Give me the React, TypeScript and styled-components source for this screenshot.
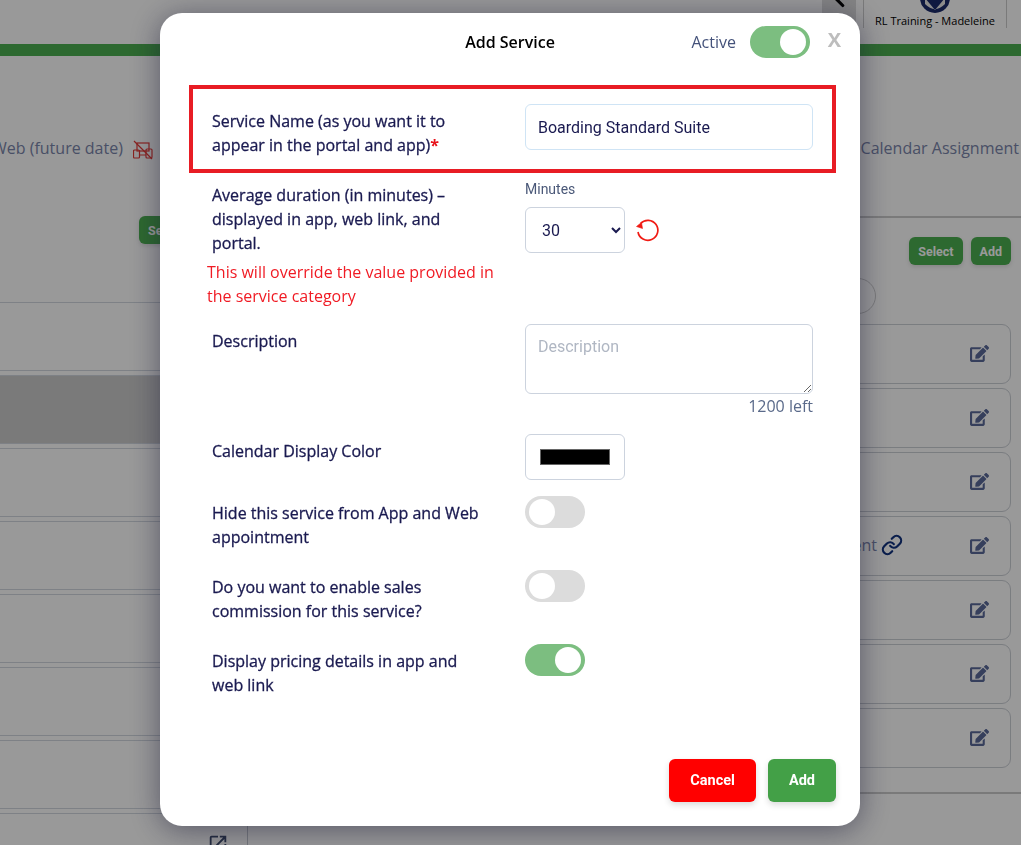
import React, { useState } from 'react';
import styled, { createGlobalStyle } from 'styled-components';
import { FaEdit } from 'react-icons/fa';
import { MdOpenInNew } from 'react-icons/md';
import { ChevronLeft, Link as LinkIcon } from 'lucide-react';

const GlobalStyle = createGlobalStyle`
  html, body {
    margin: 0;
    padding: 0;
    height: 845px;
    overflow: hidden;
    background: #fff;
    font-family: "Open Sans", sans-serif;
  }
`

const App = () => {
  const [active, setActive] = useState(true)
  const [hidden, setHidden] = useState(false)
  const [commission, setCommission] = useState(false)
  const [pricing, setPricing] = useState(true)

  return (
    <>
      <GlobalStyle />
      <Page>
        <TopBar>
          <BackBox><ChevronLeft size={30} strokeWidth={2.5} /></BackBox>
          <Account>
            <svg width="30" height="13" viewBox="0 0 30 13">
              <circle cx="15" cy="-2" r="15" fill="#1a2a6c" />
              <path d="M5 -2 L15 10 L25 -2 L25 4 Q20 9 15 9 Q10 9 5 4 Z" fill="#e8e8e8" />
            </svg>
            <span>RL Training - Madeleine</span>
          </Account>
        </TopBar>
        <GreenBar />
        <Tabs>
          <TabGroup>
            <span>Web (future date)</span>
            <svg width="20" height="20" viewBox="0 0 20 20" fill="none" stroke="#e53935" strokeWidth="1.2">
              <rect x="4" y="3" width="12" height="8" />
              <rect x="0.5" y="10" width="6" height="8" rx="1" />
              <rect x="13" y="9" width="6" height="9" rx="1" />
              <path d="M6.5 15 H13 M1 1 L19 19" />
            </svg>
          </TabGroup>
          <span>Calendar Assignment</span>
        </Tabs>
        <Columns>
          <LeftPane>
            <LeftHead><SmallBtn>Select</SmallBtn></LeftHead>
            {[0, 1, 2, 3, 4, 5, 6, 7].map(i => <LeftRow key={i} $selected={i === 1} />)}
            <OpenIcon><MdOpenInNew size={22} /></OpenIcon>
          </LeftPane>
          <RightPane>
            <RightHead>
              <SmallBtn>Select</SmallBtn>
              <SmallBtn>Add</SmallBtn>
            </RightHead>
            <SearchPill />
            {[0, 1, 2, 3, 4, 5, 6].map(i => (
              <ServiceCard key={i}>
                {i === 3 && <CardText>Appointment <LinkIcon size={22} strokeWidth={2.4} color="#11327f" /></CardText>}
                <EditBtn><FaEdit size={19} /></EditBtn>
              </ServiceCard>
            ))}
            <RightFoot />
          </RightPane>
        </Columns>
      </Page>

      <Overlay>
        <Modal>
          <ModalHead>
            <ModalTitle>Add Service</ModalTitle>
            <ActiveBox>
              <span>Active</span>
              <Toggle $on={active} onClick={() => setActive(!active)} />
            </ActiveBox>
            <CloseBtn>X</CloseBtn>
          </ModalHead>

          <NameRow>
            <NameLabel>Service Name (as you want it to appear in the portal and app)<Star>*</Star></NameLabel>
            <TextInput defaultValue="Boarding Standard Suite" />
          </NameRow>

          <DurationRow>
            <div>
              <Label>Average duration (in minutes) – displayed in app, web link, and portal.</Label>
              <Warning>This will override the value provided in the service category</Warning>
            </div>
            <div>
              <MinutesLabel>Minutes</MinutesLabel>
              <SelectLine>
                <MinuteSelect defaultValue="30">
                  <option>15</option>
                  <option>30</option>
                  <option>45</option>
                </MinuteSelect>
                <svg width="26" height="26" viewBox="0 0 26 26" fill="none" stroke="#f01b14" strokeWidth="1.7">
                  <path d="M6.5 6.5A10 10 0 1 1 4 15" />
                  <path d="M2.5 9.5 L8.5 11.5 L7.5 5.5 Z" fill="#f01b14" strokeWidth="0.6" />
                </svg>
              </SelectLine>
            </div>
          </DurationRow>

          <DescRow>
            <RowLabel>Description</RowLabel>
            <div>
              <TextArea placeholder="Description" />
              <LeftCount>1200 left</LeftCount>
            </div>
          </DescRow>

          <ColorRow>
            <RowLabel>Calendar Display Color</RowLabel>
            <ColorBox><span /></ColorBox>
          </ColorRow>

          <ToggleRow>
            <RowLabel>Hide this service from App and Web appointment</RowLabel>
            <Toggle $on={hidden} onClick={() => setHidden(!hidden)} />
          </ToggleRow>
          <ToggleRow>
            <RowLabel>Do you want to enable sales commission for this service?</RowLabel>
            <Toggle $on={commission} onClick={() => setCommission(!commission)} />
          </ToggleRow>
          <ToggleRow>
            <RowLabel>Display pricing details in app and web link</RowLabel>
            <Toggle $on={pricing} onClick={() => setPricing(!pricing)} />
          </ToggleRow>

          <Footer>
            <FootBtn $color="#ff0000">Cancel</FootBtn>
            <FootBtn $color="#43a047">Add</FootBtn>
          </Footer>
        </Modal>
      </Overlay>
    </>
  );
};

const Page = styled.div`
  width: 1021px;
  height: 845px;
  overflow: hidden;
  color: #7a85ab;
`
const TopBar = styled.header`
  height: 44px;
  display: flex;
  justify-content: flex-end;
  padding-right: 14px;
  box-sizing: border-box;
`
const BackBox = styled.div`
  width: 34px;
  height: 44px;
  margin-right: 7px;
  overflow: hidden;
  display: flex;
  justify-content: center;
  align-items: flex-start;
  color: #000;
  background: #dcdcdc;
  svg { flex: none; margin-top: -17px; }
`
const Account = styled.div`
  width: 144px;
  height: 28px;
  box-sizing: border-box;
  border-left: 1px solid #ccc;
  border-right: 1px solid #ccc;
  display: flex;
  flex-direction: column;
  align-items: center;
  font-size: 11px;
  line-height: 15px;
  color: #000;
  span { white-space: nowrap; }
`
const GreenBar = styled.div`
  height: 12px;
  background: #4caf50;
`
const Tabs = styled.nav`
  height: 160px;
  margin-left: -8px;
  padding: 80px 2px 0 0;
  box-sizing: border-box;
  display: flex;
  justify-content: space-between;
  font-size: 16px;
  line-height: 24px;
  white-space: nowrap;
`
const TabGroup = styled.div`
  display: flex;
  align-items: flex-start;
  gap: 10px;
  svg { margin-top: 4px; }
`
const Columns = styled.main`
  display: flex;
`
const LeftPane = styled.section`
  width: 248px;
  height: 629px;
  flex: none;
  box-sizing: border-box;
  border-right: 1px solid #c4c8cf;
  position: relative;
`
const LeftHead = styled.div`
  height: 86px;
  padding-left: 139px;
  box-sizing: border-box;
`
const LeftRow = styled.div<{ $selected: boolean }>`
  height: 69px;
  margin-bottom: 4px;
  box-sizing: border-box;
  border-top: 1px solid #d2d8e0;
  border-bottom: 1px solid #d2d8e0;
  background: ${props => props.$selected ? '#cccccc' : 'transparent'};
`
const OpenIcon = styled.div`
  position: absolute;
  right: 18px;
  bottom: -10px;
  color: #3c4a6b;
  background: #fff;
  display: flex;
`
const RightPane = styled.section`
  flex: 1;
  padding: 0 10px 0 0;
  border-top: 2px solid #ccc;
`
const RightHead = styled.div`
  height: 47px;
  box-sizing: border-box;
  display: flex;
  justify-content: flex-end;
  align-items: flex-start;
  gap: 8px;
  padding-top: 19px;
`
const SmallBtn = styled.button`
  height: 28px;
  padding: 0 9px;
  border: none;
  border-radius: 6px;
  background: #4caf50;
  color: #fff;
  font-family: "Roboto", sans-serif;
  font-size: 12.5px;
  font-weight: 700;
  box-shadow: 0 2px 4px rgba(0, 0, 0, .12);
`
const SearchPill = styled.div`
  width: 300px;
  height: 36px;
  margin: 13px 0 10px 328px;
  border: 1px solid #ccc;
  border-radius: 18px;
  box-sizing: border-box;
`
const ServiceCard = styled.div`
  height: 60px;
  margin-bottom: 4px;
  margin-left: 300px;
  padding: 0 21px 2px 0;
  border: 1px solid #ccd0d6;
  border-radius: 9px;
  box-sizing: border-box;
  display: flex;
  align-items: center;
  justify-content: flex-end;
  position: relative;
`
const CardText = styled.span`
  position: absolute;
  right: 107px;
  font-size: 16px;
  display: flex;
  align-items: center;
  gap: 4px;
  white-space: nowrap;
`
const EditBtn = styled.span`
  color: #5a6a9a;
  display: flex;
`
const RightFoot = styled.div`
  margin: 24px -10px 0 0;
  height: 2px;
  background: #ccc;
`
const Overlay = styled.div`
  position: fixed;
  inset: 0;
  background: rgba(0, 0, 0, .4);
`
const Modal = styled.div`
  width: 700px;
  height: 813px;
  margin: 13px 0 0 160px;
  padding: 0 24px 0 28px;
  box-sizing: border-box;
  background: #fff;
  border-radius: 22px;
  box-shadow: 0 4px 30px rgba(20, 20, 50, .5);
  display: flex;
  flex-direction: column;
`
const ModalHead = styled.div`
  height: 72px;
  flex: none;
  display: flex;
  align-items: flex-start;
  position: relative;
  justify-content: center;
  padding-top: 17px;
  box-sizing: border-box;
`
const ModalTitle = styled.h2`
  margin: 0;
  font-size: 16px;
  line-height: 24px;
  font-weight: 600;
  color: #000;
  transform: translateX(-2px);
`
const ActiveBox = styled.div`
  position: absolute;
  right: 26px;
  top: 13px;
  display: flex;
  align-items: center;
  gap: 14px;
  font-size: 16px;
  color: #44527a;
`
const CloseBtn = styled.span`
  position: absolute;
  right: -5px;
  top: 15px;
  font-size: 20px;
  font-weight: 700;
  line-height: 24px;
  color: #bdbdbd;
`
const Label = styled.div`
  width: 270px;
  color: #1a1a50;
  font-size: 16px;
  line-height: 24px;
  font-weight: 500;
  -webkit-text-stroke: .3px #1a1a50;
`
const NameLabel = styled(Label)`
  margin-top: 8px;
`
const RowLabel = styled(Label)`
  padding-top: 5px;
`
const Star = styled.span`
  color: #e8141c;
  font-weight: 700;
  -webkit-text-stroke: 0;
`
const NameRow = styled.div`
  height: 88px;
  flex: none;
  margin: 0 0 0 1px;
  padding: 0 19px 0 19px;
  box-sizing: border-box;
  border: 4px solid #e81c24;
  display: grid;
  grid-template-columns: 313px 1fr;
  align-items: center;
`
const Cols = styled.div`
  display: grid;
  grid-template-columns: 313px 288px;
  padding-left: 24px;
  flex: none;
  align-items: start;
`
const fieldBorder = '#ccd3de'
const TextInput = styled.input`
  width: 288px;
  height: 46px;
  margin-bottom: 4px;
  box-sizing: border-box;
  padding: 0 12px;
  border: 1px solid #cfe4f5;
  border-radius: 6px;
  font-family: "Roboto", sans-serif;
  font-size: 16px;
  color: #1a1a50;
  outline: none;
`
const DurationRow = styled(Cols)`
  padding-top: 10px;
  height: 151px;
  box-sizing: border-box;
`
const Warning = styled.p`
  margin: 5px 0 0 -5px;
  width: 300px;
  color: #f01b24;
  font-size: 16px;
  line-height: 24px;
`
const MinutesLabel = styled.div`
  font-family: "Roboto", sans-serif;
  font-size: 14px;
  font-weight: 400;
  line-height: 24px;
  color: #4a5878;
  margin-top: -6px;
`
const SelectLine = styled.div`
  display: flex;
  align-items: center;
  gap: 9px;
  margin-top: 6px;
`
const MinuteSelect = styled.select`
  width: 100px;
  height: 46px;
  padding: 0 12px;
  border: 1px solid ${fieldBorder};
  border-radius: 6px;
  background: #fff;
  font-family: "Roboto", sans-serif;
  font-size: 16px;
  color: #1a1a50;
`
const DescRow = styled(Cols)`
  height: 110px;
`
const TextArea = styled.textarea`
  display: block;
  width: 288px;
  height: 70px;
  box-sizing: border-box;
  padding: 12px;
  border: 1px solid ${fieldBorder};
  border-radius: 6px;
  font-family: "Roboto", sans-serif;
  font-size: 16px;
  line-height: 20px;
  outline: none;
  &::placeholder { color: #b0b7c3; }
`
const LeftCount = styled.div`
  text-align: right;
  font-size: 16px;
  line-height: 24px;
  color: #5a6a8a;
`
const ColorRow = styled(Cols)`
  height: 62px;
`
const ColorBox = styled.div`
  width: 100px;
  height: 46px;
  box-sizing: border-box;
  border: 1px solid ${fieldBorder};
  border-radius: 6px;
  display: flex;
  align-items: center;
  justify-content: center;
  span {
    width: 70px;
    height: 16px;
    box-sizing: border-box;
    border: 1px solid #666;
    background: #000;
  }
`
const ToggleRow = styled(Cols)`
  height: 74px;
`
const Toggle = styled.button<{ $on: boolean }>`
  width: 60px;
  height: 32px;
  padding: 0;
  border: none;
  border-radius: 16px;
  background: ${props => props.$on ? '#7cbe80' : '#dcdcdc'};
  position: relative;
  cursor: pointer;
  &::after {
    content: '';
    position: absolute;
    top: 3px;
    left: ${props => props.$on ? '30px' : '4px'};
    width: 26px;
    height: 26px;
    border-radius: 50%;
    background: #fff;
  }
`
const Footer = styled.div`
  margin-top: auto;
  padding-bottom: 24px;
  display: flex;
  justify-content: flex-end;
  gap: 12px;
`
const FootBtn = styled.button<{ $color: string }>`
  height: 43px;
  padding: 0 21px;
  min-width: 68px;
  border: none;
  border-radius: 6px;
  background: ${props => props.$color};
  color: #fff;
  font-family: "Roboto", sans-serif;
  font-size: 14.5px;
  font-weight: 700;
  box-shadow: 0 3px 6px rgba(0, 0, 0, .14);
`

export default App;
